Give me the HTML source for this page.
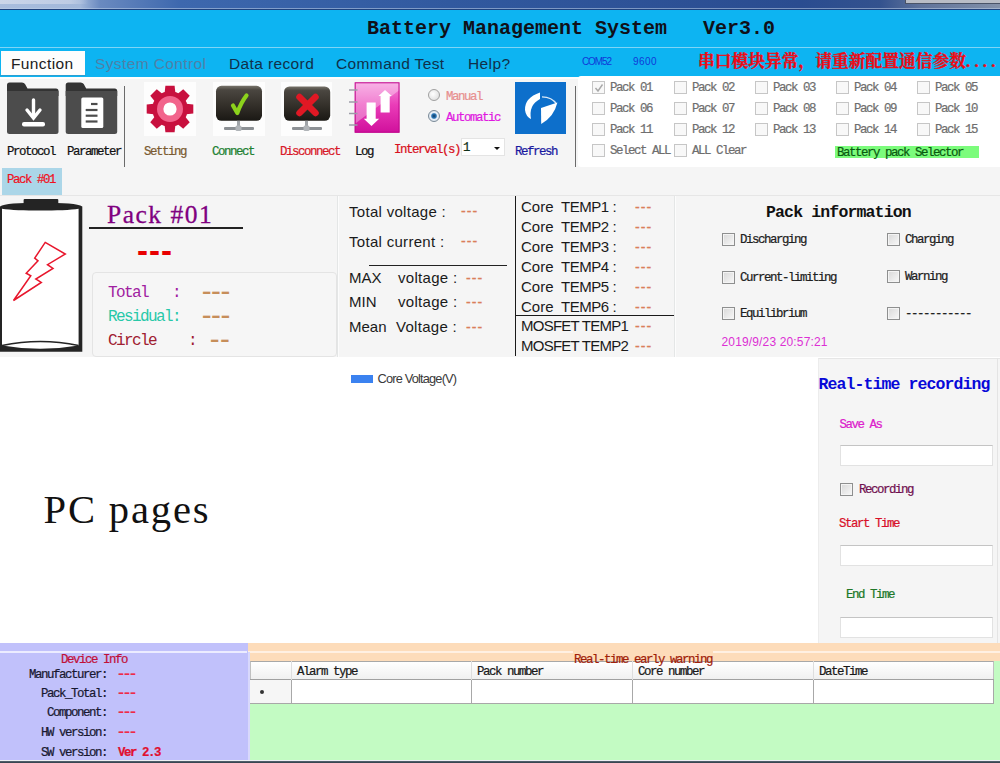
<!DOCTYPE html>
<html><head><meta charset="utf-8"><title>Battery Management System</title>
<style>
*{box-sizing:border-box;margin:0;padding:0}
html,body{width:1000px;height:763px;overflow:hidden;background:#fff}
body{position:relative;font-family:"Liberation Sans",sans-serif;color:#000}
.a{position:absolute;white-space:pre}
.ss{font-family:"Liberation Mono",monospace;font-size:12.4px;letter-spacing:-1.44px;line-height:14px;height:14px;margin-top:1px;-webkit-text-stroke:0.22px currentColor}
.sg{font-family:"Liberation Sans",sans-serif;font-size:15px;line-height:18px;height:18px;color:#1a1a1a}
.cb{position:absolute;width:13px;height:13px;border:1px solid #c6c6c6;background:#f8f8f8}
.cbd{position:absolute;width:13px;height:13px;border:1px solid #8e8f8f;background:linear-gradient(135deg,#d8d8d8,#f8f8f8);box-shadow:inset 0 0 0 1px #f4f4f4}
.inp{position:absolute;background:#fff;border:1px solid #e2e2e2;border-top-color:#c4c4c4}
.s16{font-family:"Liberation Mono",monospace;font-size:16px;letter-spacing:-1.6px;line-height:18px;height:18px;margin-top:2px}
.dsh{font-family:"Liberation Sans",sans-serif;font-size:14px;line-height:14px;color:#da7e5a;letter-spacing:1.15px;-webkit-text-stroke:0.3px #da7e5a}
.od{font-family:"Liberation Serif",serif;font-weight:bold;font-size:28px;line-height:30px;color:#c68e5a}
.rd{font-family:"Liberation Serif",serif;font-weight:bold;font-size:18px;line-height:14px;height:14px;color:#ee2a48;margin-top:-0.6px}
</style></head><body>
<!-- top chrome -->
<div class="a" id="chrome" style="left:0;top:0;width:1000px;height:10.4px;background:linear-gradient(90deg,#a9bddd 0,#a2b8da 8%,#6a8ac0 10%,#3d68ae 18%,#31599f 45%,#2a4c90 80%,#33528e 88%,#5f739b 92%,#8391a9 100%)"></div>
<div class="a" style="left:0;top:0;width:88px;height:4px;background:linear-gradient(90deg,#d4dcec,#c4d0e6 80%,rgba(196,208,230,0));opacity:.8"></div>
<div class="a" style="left:905px;top:0;width:95px;height:2.6px;background:#b9bdc6;border-left:1px solid #4a5264"></div>
<div class="a" style="left:905px;top:2.6px;width:95px;height:1px;background:#4a5468"></div>
<div class="a" style="left:0;top:7.6px;width:1000px;height:1.4px;background:rgba(190,208,232,.55)"></div>
<div class="a" style="left:0;top:9px;width:1000px;height:1.4px;background:#1f427e"></div>
<!-- title bar -->
<div class="a" id="titlebar" style="left:0;top:10px;width:1000px;height:67.2px;background:#0db4f2"></div>
<div class="a" style="left:0;top:47px;width:1000px;height:1px;background:#7fd4f6"></div>
<div class="a" id="title" style="left:367px;top:17px;font-family:'Liberation Mono',monospace;font-weight:bold;font-size:20px;line-height:24px;color:#101018">Battery Management System   Ver3.0</div>
<!-- menu -->
<div class="a" style="left:1px;top:51px;width:84.2px;height:23.6px;background:#fdfdfd"></div><div class="a" style="left:0;top:74.6px;width:86px;height:1.8px;background:#2a9fd2"></div>
<div class="a" id="m1" style="left:11px;top:55px;font-size:15.5px;letter-spacing:0.38px;line-height:18px;color:#202020">Function</div>
<div class="a" id="m2" style="left:95px;top:55px;font-size:15.5px;letter-spacing:0.38px;line-height:18px;color:#4f80a8">System Control</div>
<div class="a" id="m3" style="left:229px;top:55px;font-size:15.5px;letter-spacing:0.38px;line-height:18px;color:#10304a">Data record</div>
<div class="a" id="m4" style="left:336px;top:55px;font-size:15.5px;letter-spacing:0.38px;line-height:18px;color:#10304a">Command Test</div>
<div class="a" id="m5" style="left:468px;top:55px;font-size:15.5px;letter-spacing:0.38px;line-height:18px;color:#10304a">Help?</div>
<div class="a" id="com" style="left:582px;top:56px;font-size:10px;line-height:12px;color:#1038d8;letter-spacing:-1.1px">COM52</div>
<div class="a" id="baud" style="left:633px;top:56px;font-size:10px;line-height:12px;color:#1038d8;letter-spacing:0.4px">9600</div>
<div class="a" id="warn" style="left:698px;top:52px;font-family:'Liberation Serif','Noto Serif CJK SC',serif;font-weight:bold;font-size:16.75px;line-height:20px;color:#ee0a14;-webkit-text-stroke:0.35px #ee0a14">串口模块异常，请重新配置通信参数<span style="letter-spacing:4.2px">....</span></div>
<!-- toolbar -->
<div class="a" id="toolbar" style="left:0;top:77px;width:1000px;height:119px;background:#f5f5f5"></div>

<div class="a" style="left:0;top:77.2px;width:578px;height:1.6px;background:#fdfdfd"></div>
<!-- folder icons -->
<svg class="a" style="left:7px;top:82px" width="52" height="53" viewBox="0 0 52 53">
 <path d="M2.5 0.5H15Q17 0.5 18 2L20.5 6.5H49Q51.5 6.5 51.5 9V14H0V3Q0 0.5 2.5 0.5Z" fill="#333"/>
 <path d="M0 9H51.5V49.5Q51.5 52 49 52H2.5Q0 52 0 49.5Z" fill="#4c4c4c"/>
 <g stroke="#fff" stroke-width="3.4" fill="none" stroke-linecap="round"><path d="M26.5 18V35"/><path d="M20 28L26.5 36L33 28"/></g>
 <rect x="15" y="40" width="23" height="4.5" rx="2" fill="#fff"/>
</svg>
<svg class="a" style="left:65px;top:82px" width="53" height="53" viewBox="0 0 53 53">
 <g transform="translate(0.7 0)">
 <path d="M2.5 0.5H15Q17 0.5 18 2L20.5 6.5H49Q51.5 6.5 51.5 9V14H0V3Q0 0.5 2.5 0.5Z" fill="#333"/>
 <path d="M0 9H51.5V49.5Q51.5 52 49 52H2.5Q0 52 0 49.5Z" fill="#4c4c4c"/>
 <rect x="15.6" y="15.5" width="22" height="30.5" rx="1.5" fill="#fff"/>
 <g stroke="#4c4c4c" stroke-width="2.2"><path d="M25.3 22H31.8"/><path d="M20 28H31.8"/><path d="M20 33.7H31.8"/><path d="M20 39.5H31.8"/></g>
 </g>
</svg>
<div class="a" style="left:124px;top:86px;width:1px;height:81px;background:#6a6a6a"></div>
<!-- gear -->
<div class="a" style="left:144px;top:82px;width:52px;height:54px;background:#fdfdfd"></div>
<svg class="a" style="left:145.6px;top:84.5px" width="48" height="48" viewBox="-24 -24 48 48">
 <g fill="#c8103e">
  <circle r="17.8"/>
  <path d="M-4.6 -23.3H4.6L5.6 -14H-5.6Z" transform="rotate(0)"/>
  <path d="M-4.6 -23.3H4.6L5.6 -14H-5.6Z" transform="rotate(45)"/>
  <path d="M-4.6 -23.3H4.6L5.6 -14H-5.6Z" transform="rotate(90)"/>
  <path d="M-4.6 -23.3H4.6L5.6 -14H-5.6Z" transform="rotate(135)"/>
  <path d="M-4.6 -23.3H4.6L5.6 -14H-5.6Z" transform="rotate(180)"/>
  <path d="M-4.6 -23.3H4.6L5.6 -14H-5.6Z" transform="rotate(225)"/>
  <path d="M-4.6 -23.3H4.6L5.6 -14H-5.6Z" transform="rotate(270)"/>
  <path d="M-4.6 -23.3H4.6L5.6 -14H-5.6Z" transform="rotate(315)"/>
 </g>
 <circle r="13" fill="#f2648c"/><circle r="6.6" fill="#fff"/>
</svg>
<!-- connect -->
<div class="a" style="left:212.5px;top:82px;width:52px;height:53.5px;background:#fdfdfd"></div>
<svg class="a" style="left:212px;top:82px" width="53" height="53" viewBox="0 0 53 53">
 <defs><linearGradient id="mg" x1="0" y1="0" x2="0" y2="1"><stop offset="0" stop-color="#77736a"/><stop offset="0.12" stop-color="#4a4640"/><stop offset="0.55" stop-color="#34302a"/><stop offset="1" stop-color="#1a1814"/></linearGradient></defs>
 <rect x="4" y="3.8" width="46" height="35" rx="5.5" fill="url(#mg)"/>
 <rect x="25" y="38.8" width="3" height="6" fill="#a0a4a8"/>
 <rect x="12" y="45" width="30" height="3" rx="1" fill="#8c9094"/><rect x="23.5" y="43.5" width="6" height="5.5" rx="1.5" fill="#b0b4b8"/>
 <path d="M21 23.5L25.3 31Q29 20.5 34.5 13.5" fill="none" stroke="#8cd21c" stroke-width="4.2" stroke-linecap="round" stroke-linejoin="round"/>
</svg>
<!-- disconnect -->
<div class="a" style="left:280.5px;top:82px;width:51px;height:53.5px;background:#fdfdfd"></div>
<svg class="a" style="left:280px;top:82px" width="53" height="53" viewBox="0 0 53 53">
 <rect x="4" y="4.5" width="46.2" height="34.3" rx="5.5" fill="url(#mg)"/>
 <rect x="25" y="38.8" width="3" height="6" fill="#a0a4a8"/>
 <rect x="12" y="45" width="30" height="3" rx="1" fill="#8c9094"/><rect x="23.5" y="43.5" width="6" height="5.5" rx="1.5" fill="#b0b4b8"/>
 <g stroke="#e01824" stroke-width="6.5" stroke-linecap="round"><path d="M19.5 15L35.5 31"/><path d="M35.5 15L19.5 31"/></g>
</svg>
<!-- log -->
<svg class="a" style="left:349px;top:82px" width="53" height="53" viewBox="0 0 53 53">
 <defs><linearGradient id="lg" x1="0" y1="0" x2="0" y2="1"><stop offset="0" stop-color="#f48cda"/><stop offset="0.45" stop-color="#ea3cb8"/><stop offset="1" stop-color="#d0109c"/></linearGradient></defs>
 <rect x="5.7" y="0.3" width="44.8" height="50.4" fill="url(#lg)"/>
 <path d="M5.7 0.3H50.5V8L5.7 42Z" fill="#fff" opacity=".34"/>
 <rect x="6.2" y="0.8" width="43.8" height="49.4" fill="none" stroke="#c0088c" stroke-width="1"/>
 <g stroke="#9c9ca8" stroke-width="1.5"><path d="M0 8H8.5"/><path d="M0 20H8.5"/><path d="M0 31.5H8.5"/><path d="M0 43H8.5"/></g>
 <path d="M36 8L42.8 14H40.7V30.4H31.6V14H29.5Z" fill="#fff"/>
 <path d="M22.5 44L14.8 36.7H17.6V20.6H26.7V36.7H30.2Z" fill="#fff"/>
</svg>
<!-- refresh -->
<div class="a" style="left:515px;top:82.4px;width:51.4px;height:52px;background:#0d6fcb"></div>
<svg class="a" style="left:515px;top:82px" width="52" height="53" viewBox="0 0 52 53">
 <path d="M25 10.6Q9.5 16 10 28Q10.8 34.5 16 37Q13.5 23 25 17Z" fill="#fff"/>
 <path d="M26 26L42.4 20.6Q39 35 26.2 42Z" fill="#fff"/>
 <path d="M27 14.8Q37 15 41.6 22" fill="none" stroke="#fff" stroke-width="1.2" opacity=".85"/>
</svg>
<!-- toolbar labels -->
<div class="a ss" id="l1" style="left:7px;top:144px;color:#101010">Protocol</div>
<div class="a ss" id="l2" style="left:67px;top:144px;color:#101010">Parameter</div>
<div class="a ss" id="l3" style="left:144px;top:144px;color:#7a5a30">Setting</div>
<div class="a ss" id="l4" style="left:212px;top:144px;color:#208030">Connect</div>
<div class="a ss" id="l5" style="left:280px;top:144px;color:#d81828">Disconnect</div>
<div class="a ss" id="l6" style="left:355px;top:144px;color:#101010">Log</div>
<div class="a ss" id="l7" style="left:394px;top:142px;color:#d81020">Interval(s)</div>
<div class="a ss" id="l8" style="left:515px;top:144px;color:#1818a0">Refresh</div>
<!-- radios -->
<div class="a" style="left:428px;top:89px;width:12px;height:12px;border-radius:50%;border:1px solid #a0a0a0;background:radial-gradient(circle at 40% 40%,#fff,#d8d8d8)"></div>
<div class="a" style="left:428px;top:110px;width:12px;height:12px;border-radius:50%;border:1px solid #7a8a98;background:radial-gradient(circle at 50% 50%,#103860 0,#2a78b8 32%,#e8f0f8 48%,#d0d8e0 100%)"></div>
<div class="a ss" id="r1" style="left:446px;top:89px;color:#e89090">Manual</div>
<div class="a ss" id="r2" style="left:446px;top:110px;color:#e018e0">Automatic</div>
<!-- combo -->
<div class="a" style="left:461px;top:138px;width:44px;height:18px;background:#fff;border:1px solid #e4e4e4"></div>
<div class="a ss" style="left:463px;top:140px;color:#103018">1</div>
<div class="a" style="left:494px;top:146.8px;width:0;height:0;border-left:3.8px solid transparent;border-right:3.8px solid transparent;border-top:3.8px solid #111"></div>
<div class="a" style="left:575px;top:86px;width:1px;height:81px;background:#6a6a6a"></div>
<!-- pack selector -->
<div class="a" id="psel" style="left:578px;top:76px;width:422px;height:91px;background:#fff;border-radius:3px 0 0 3px"></div>
<div class="cb" style="left:592px;top:81px"></div><div class="a ss" style="left:610px;top:80px;color:#6e6e6e">Pack 01</div>
<div class="cb" style="left:674px;top:81px"></div><div class="a ss" style="left:692px;top:80px;color:#6e6e6e">Pack 02</div>
<div class="cb" style="left:755px;top:81px"></div><div class="a ss" style="left:773px;top:80px;color:#6e6e6e">Pack 03</div>
<div class="cb" style="left:836px;top:81px"></div><div class="a ss" style="left:854px;top:80px;color:#6e6e6e">Pack 04</div>
<div class="cb" style="left:917px;top:81px"></div><div class="a ss" style="left:935px;top:80px;color:#6e6e6e">Pack 05</div>
<div class="cb" style="left:592px;top:102px"></div><div class="a ss" style="left:610px;top:101px;color:#6e6e6e">Pack 06</div>
<div class="cb" style="left:674px;top:102px"></div><div class="a ss" style="left:692px;top:101px;color:#6e6e6e">Pack 07</div>
<div class="cb" style="left:755px;top:102px"></div><div class="a ss" style="left:773px;top:101px;color:#6e6e6e">Pack 08</div>
<div class="cb" style="left:836px;top:102px"></div><div class="a ss" style="left:854px;top:101px;color:#6e6e6e">Pack 09</div>
<div class="cb" style="left:917px;top:102px"></div><div class="a ss" style="left:935px;top:101px;color:#6e6e6e">Pack 10</div>
<div class="cb" style="left:592px;top:123px"></div><div class="a ss" style="left:610px;top:122px;color:#6e6e6e">Pack 11</div>
<div class="cb" style="left:674px;top:123px"></div><div class="a ss" style="left:692px;top:122px;color:#6e6e6e">Pack 12</div>
<div class="cb" style="left:755px;top:123px"></div><div class="a ss" style="left:773px;top:122px;color:#6e6e6e">Pack 13</div>
<div class="cb" style="left:836px;top:123px"></div><div class="a ss" style="left:854px;top:122px;color:#6e6e6e">Pack 14</div>
<div class="cb" style="left:917px;top:123px"></div><div class="a ss" style="left:935px;top:122px;color:#6e6e6e">Pack 15</div>
<div class="cb" style="left:592px;top:144px"></div><div class="a ss" style="left:610px;top:143px;color:#6e6e6e">Select ALL</div>
<div class="cb" style="left:674px;top:144px"></div><div class="a ss" style="left:692px;top:143px;color:#6e6e6e">ALL Clear</div>
<svg class="a" style="left:594px;top:83px" width="10" height="10" viewBox="0 0 10 10"><path d="M1.5 5L4 8L8.5 1.5" fill="none" stroke="#a8a8a8" stroke-width="1.4"/></svg>
<div class="a" style="left:835px;top:146px;width:144px;height:12px;background:#7cfc7c"></div>
<div class="a ss" id="bps" style="left:837px;top:145px;color:#0a5a10">Battery pack Selector</div>
<!-- tab -->
<div class="a" style="left:2px;top:168px;width:60px;height:27px;background:#abd6e8"></div>
<div class="a ss" id="tab" style="left:7px;top:172px;color:#f01020">Pack #01</div>

<!-- info panel -->
<div class="a" id="info" style="left:0;top:195px;width:1000px;height:162.4px;background:#f5f5f5;border-top:1px solid #e6e6e6"></div>
<div class="a" style="left:337px;top:196px;width:1px;height:161px;background:#e4e6e6"></div><div class="a" style="left:338px;top:196px;width:1px;height:161px;background:#fcfcfc"></div>
<div class="a" style="left:674px;top:196px;width:1px;height:161px;background:#e4e6e6"></div><div class="a" style="left:675px;top:196px;width:1px;height:161px;background:#fcfcfc"></div>
<!-- battery -->
<svg class="a" style="left:0;top:196px" width="84" height="160" viewBox="0 0 84 160">
 <rect x="23.6" y="2.9" width="34.7" height="7" rx="1" fill="#242424"/>
 <path d="M0 10.5C4 7.6 18 7.1 41 7.1C64 7.1 78 7.6 82.3 10.5V155.8H0Z" fill="#242424"/>
 <path d="M2 12.8C10 14.2 25 14.5 40.3 14.5C56 14.5 71 14.2 78.6 12.8V149.5Q40.3 156.1 2 149.5Z" fill="#fff"/>
 <path d="M2 149.5Q40.3 141.7 78.6 149.5" fill="none" stroke="#242424" stroke-width="1.5"/>
 <path d="M45.2 46.4L65.3 58L47.5 68.7L53 72.4L35.8 83L41.3 86.4L13.5 104.5L30.8 79.8L26.2 77.2L38 64.8L34.7 62.2Z" fill="none" stroke="#e8162c" stroke-width="1.5" stroke-linejoin="miter"/>
</svg>
<div class="a" id="pk" style="left:107px;top:200px;font-family:'Liberation Serif',serif;font-size:25.5px;line-height:30px;color:#800080;letter-spacing:1.5px;-webkit-text-stroke:0.3px #800080">Pack #01</div>
<div class="a" style="left:89px;top:227px;width:154px;height:2px;background:#222"></div>
<div class="a" id="bigd" style="left:137px;top:231px;font-family:'Liberation Sans',sans-serif;font-weight:bold;font-size:33px;line-height:40px;letter-spacing:1px;color:#e80000">---</div>
<div class="a" style="left:92px;top:272px;width:245px;height:85px;border:1px solid #e4e4e4;border-radius:4px;background:#f6f6f6"></div>
<div class="a s16" id="t1" style="left:108px;top:282px;color:#a020a0">Total</div>
<div class="a s16" style="left:172px;top:282px;color:#a020a0">:</div>
<div class="a od" id="od1" style="left:202px;top:275.3px">---</div>
<div class="a s16" id="t2" style="left:108px;top:306px;color:#28c8a8">Residual:</div>
<div class="a od" id="od2" style="left:202px;top:299.3px">---</div>
<div class="a s16" id="t3" style="left:108px;top:330px;color:#a02030">Circle</div>
<div class="a s16" style="left:188px;top:330px;color:#a02030">:</div>
<div class="a od" id="od3" style="left:210px;top:323.3px;letter-spacing:1px">--</div>
<!-- voltages -->
<div class="a sg" id="v1" style="left:349px;top:203px;letter-spacing:0.3px">Total voltage :</div>
<div class="a sg" id="v2" style="left:349px;top:233px;letter-spacing:0.3px">Total current :</div>
<div class="a" style="left:369px;top:265px;width:138px;height:1px;background:#222"></div>
<div class="a sg" id="v3" style="left:349px;top:269px">MAX</div><div class="a sg" id="v3b" style="letter-spacing:0.3px;left:398px;top:269px">voltage :</div>
<div class="a sg" id="v4" style="left:349px;top:293px">MIN</div><div class="a sg" id="v4b" style="letter-spacing:0.3px;left:398px;top:293px">voltage :</div>
<div class="a sg" id="v5" style="left:349px;top:318px">Mean</div><div class="a sg" id="v5b" style="letter-spacing:0.3px;left:396px;top:318px">Voltage :</div>
<div class="a dsh" style="left:461px;top:204px">---</div>
<div class="a dsh" style="left:461px;top:234px">---</div>
<div class="a dsh" style="left:466px;top:271px">---</div>
<div class="a dsh" style="left:466px;top:295px">---</div>
<div class="a dsh" style="left:466px;top:320px">---</div>
<!-- temps -->
<div class="a" style="left:515px;top:196px;width:1.2px;height:160px;background:#1a1a1a"></div>
<div class="a" style="left:515px;top:315px;width:159px;height:1.2px;background:#1a1a1a"></div>
<div class="a sg" style="left:521px;top:198px">Core</div><div class="a sg" style="left:561px;top:198px;letter-spacing:-0.45px">TEMP1 :</div><div class="a dsh" style="left:635px;top:200px">---</div>
<div class="a sg" style="left:521px;top:218px">Core</div><div class="a sg" style="left:561px;top:218px;letter-spacing:-0.45px">TEMP2 :</div><div class="a dsh" style="left:635px;top:220px">---</div>
<div class="a sg" style="left:521px;top:238px">Core</div><div class="a sg" style="left:561px;top:238px;letter-spacing:-0.45px">TEMP3 :</div><div class="a dsh" style="left:635px;top:240px">---</div>
<div class="a sg" style="left:521px;top:258px">Core</div><div class="a sg" style="left:561px;top:258px;letter-spacing:-0.45px">TEMP4 :</div><div class="a dsh" style="left:635px;top:260px">---</div>
<div class="a sg" style="left:521px;top:278px">Core</div><div class="a sg" style="left:561px;top:278px;letter-spacing:-0.45px">TEMP5 :</div><div class="a dsh" style="left:635px;top:280px">---</div>
<div class="a sg" style="left:521px;top:298px">Core</div><div class="a sg" style="left:561px;top:298px;letter-spacing:-0.45px">TEMP6 :</div><div class="a dsh" style="left:635px;top:300px">---</div>
<div class="a sg" id="mf0" style="left:521px;top:317px;letter-spacing:-0.75px">MOSFET TEMP1</div><div class="a dsh" style="left:635px;top:319px">---</div>
<div class="a sg" id="mf1" style="left:521px;top:337px;letter-spacing:-0.75px">MOSFET TEMP2</div><div class="a dsh" style="left:635px;top:339px">---</div>

<!-- pack information -->
<div class="a" id="pi" style="left:766px;top:204px;font-family:'Liberation Mono',monospace;font-weight:bold;font-size:16.5px;letter-spacing:-0.85px;line-height:18px;color:#111">Pack information</div>
<div class="cbd" style="left:722px;top:233px"></div><div class="a ss" style="left:740px;top:232px;color:#202020">Discharging</div>
<div class="cbd" style="left:887px;top:233px"></div><div class="a ss" style="left:905px;top:232px;color:#202020">Charging</div>
<div class="cbd" style="left:722px;top:271px"></div><div class="a ss" style="left:740px;top:270px;color:#202020">Current-limiting</div>
<div class="cbd" style="left:887px;top:270px"></div><div class="a ss" style="left:905px;top:269px;color:#202020">Warning</div>
<div class="cbd" style="left:722px;top:307px"></div><div class="a ss" style="left:740px;top:306px;color:#202020">Equilibrium</div>
<div class="cbd" style="left:887px;top:307px"></div><div class="a ss" style="left:905px;top:306px;color:#202020">-----------</div>
<div class="a" id="ts" style="left:721.5px;top:334.5px;font-size:12px;line-height:14px;color:#dc30d4;letter-spacing:0.15px">2019/9/23 20:57:21</div>

<!-- chart legend -->
<div class="a" style="left:350.5px;top:374.6px;width:22px;height:8.6px;background:#3b82f0"></div>
<div class="a" id="leg" style="left:377.5px;top:372px;font-size:12.8px;line-height:14px;color:#3a3a3a;letter-spacing:-0.82px">Core Voltage(V)</div>
<div class="a" id="pc" style="left:43.5px;top:485px;font-family:'Liberation Serif',serif;font-size:40.6px;letter-spacing:1.85px;line-height:50px;color:#111">PC pages</div>
<!-- recording -->
<div class="a" id="rec" style="left:818px;top:357.5px;width:182px;height:285.5px;background:#f5f5f5;border-top:1px solid #e6e6e6;border-left:1px solid #ececec"></div>
<div class="a" style="left:996.5px;top:358px;width:1px;height:285px;background:#e4e4e4"></div>
<div class="a" id="rt" style="left:818.5px;top:376px;font-family:'Liberation Mono',monospace;font-weight:bold;font-size:16.5px;letter-spacing:-0.9px;line-height:18px;color:#0808d8">Real-time recording</div>
<div class="a ss" style="left:839.5px;top:416.5px;color:#dc20cc">Save As</div>
<div class="inp" style="left:840px;top:445px;width:153px;height:21px"></div>
<div class="cbd" style="left:840px;top:483px"></div>
<div class="a ss" style="left:859px;top:482px;color:#701050">Recording</div>
<div class="a ss" style="left:839px;top:516px;color:#d81028">Start Time</div>
<div class="inp" style="left:840px;top:545px;width:153px;height:21px"></div>
<div class="a ss" style="left:846px;top:587px;color:#207828">End Time</div>
<div class="inp" style="left:840px;top:617px;width:153px;height:21px"></div>
<!-- bottom: device info -->
<div class="a" id="dev" style="left:0;top:643.4px;width:247.6px;height:116.6px;background:#c1c1fb"></div>
<div class="a" style="left:0;top:651px;width:247px;height:1.5px;background:#ececff"></div>
<div class="a ss" style="left:61px;top:652px;color:#c01038">Device Info</div>
<div class="a ss" style="left:29px;top:667px;color:#181830">Manufacturer:</div><div class="a rd" style="left:118px;top:667px">---</div>
<div class="a ss" style="left:41px;top:686px;color:#181830">Pack_Total:</div><div class="a rd" style="left:118px;top:686px">---</div>
<div class="a ss" style="left:47px;top:705px;color:#181830">Component:</div><div class="a rd" style="left:118px;top:705px">---</div>
<div class="a ss" style="left:41px;top:725px;color:#181830">HW version:</div><div class="a rd" style="left:118px;top:725px">---</div>
<div class="a ss" style="left:41px;top:745px;color:#181830">SW version:</div><div class="a ss" style="left:118px;top:745px;color:#e01030;font-weight:bold">Ver 2.3</div>

<!-- bottom: warning -->
<div class="a" id="peach" style="left:247.6px;top:643.4px;width:752px;height:17.5px;background:#fddcba"></div>
<div class="a" style="left:248px;top:651.3px;width:752px;height:1.6px;background:#fff0e2"></div>
<div class="a" style="left:573px;top:650px;width:140px;height:6px;background:#fddcba"></div>
<div class="a ss" style="left:574px;top:651.6px;color:#a02008;z-index:5">Real-time early warning</div>
<div class="a" id="green" style="left:249px;top:661px;width:751px;height:99px;background:#c3fbc3"></div>
<div class="a" style="left:248px;top:652px;width:2px;height:108px;background:#d8d8fc"></div>
<div class="a" id="tbl" style="left:250px;top:660.5px;width:744px;height:43.5px;background:#fff;border:1px solid #a8a8a8"></div>
<div class="a" style="left:250px;top:660.5px;width:744px;height:19.5px;background:linear-gradient(#fff,#f0f0f0);border:1px solid #c0c0c0;border-top-color:#a8a8a8"></div>
<div class="a" style="left:250px;top:679px;width:744px;height:1px;background:#a0a0a0"></div>
<div class="a" style="left:250px;top:680px;width:41px;height:23px;background:#f6f6f6"></div>
<div class="a" style="left:291px;top:661px;width:1px;height:19px;background:#dedede"></div><div class="a" style="left:291px;top:680px;width:1px;height:23px;background:#a8a8a8"></div>
<div class="a" style="left:471px;top:661px;width:1px;height:19px;background:#dedede"></div><div class="a" style="left:471px;top:680px;width:1px;height:23px;background:#a8a8a8"></div>
<div class="a" style="left:632px;top:661px;width:1px;height:19px;background:#dedede"></div><div class="a" style="left:632px;top:680px;width:1px;height:23px;background:#a8a8a8"></div>
<div class="a" style="left:813px;top:661px;width:1px;height:19px;background:#dedede"></div><div class="a" style="left:813px;top:680px;width:1px;height:23px;background:#a8a8a8"></div>
<div class="a ss" style="left:297px;top:664px;color:#181818">Alarm type</div>
<div class="a ss" style="left:477px;top:664px;color:#181818">Pack number</div>
<div class="a ss" style="left:638px;top:664px;color:#181818">Core number</div>
<div class="a ss" style="left:819px;top:664px;color:#181818">DateTime</div>
<div class="a" style="left:260px;top:690px;width:4px;height:4px;border-radius:50%;background:#333"></div>
<div class="a" style="left:0;top:759.6px;width:1000px;height:1.4px;background:#eef0f4"></div><div class="a" style="left:0;top:761px;width:1000px;height:2px;background:linear-gradient(#5a6874,#2e3a46)"></div>
</body></html>
